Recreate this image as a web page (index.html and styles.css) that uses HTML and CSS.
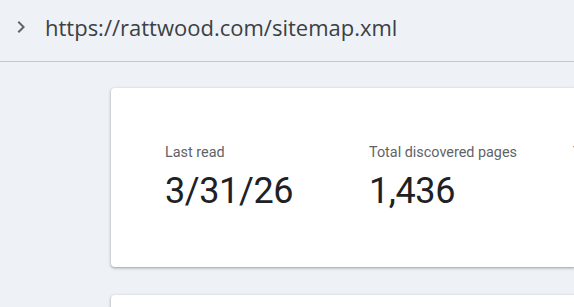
FILE: index.html
```html
<!DOCTYPE html>
<html>
<head>
<meta charset="utf-8">
<link rel="stylesheet" href="styles.css">
</head>
<body>
<header class="top">
  <svg class="chev" width="24" height="24" viewBox="0 0 24 24"><path d="M8.6 16.6 13.2 12 8.6 7.4 10 6l6 6-6 6z" fill="#5f6368"/></svg>
  <span class="url">https://rattwood.com/sitemap.xml</span>
</header>
<main class="content">
  <section class="card">
    <div class="stat">
      <div class="label">Last read</div>
      <div class="value">3/31/26</div>
    </div>
    <div class="stat">
      <div class="label">Total discovered pages</div>
      <div class="value">1,436</div>
    </div>
    <div class="stat">
      <div class="label">Total discovered videos</div>
      <div class="value">0</div>
    </div>
  </section>
  <section class="card second"></section>
</main>
</body>
</html>
```
FILE: styles.css
```css
html, body {
  margin: 0;
  padding: 0;
  background: #eef2f7;
  font-family: Roboto, "Liberation Sans", sans-serif;
  overflow: hidden;
}
.top {
  height: 62px;
  box-sizing: border-box;
  border-bottom: 1px solid #c4c7c5;
  display: flex;
  align-items: center;
  padding-left: 9px;
}
.chev {
  flex: none;
  margin-top: -7px;
}
.url {
  margin-left: 12px;
  margin-top: -8px;
  font-family: "Open Sans", Roboto, sans-serif;
  font-size: 22px;
  color: #3c4043;
}
.content {
  padding: 26px 0 0 111px;
  display: flex;
  flex-direction: column;
  gap: 28px;
}
.card {
  background: #fff;
  border-radius: 4px 0 0 4px;
  box-shadow: 0 1px 2px rgba(60,64,67,0.3), 0 1px 3px 1px rgba(60,64,67,0.15);
  height: 179px;
  box-sizing: border-box;
  padding: 55px 0 0 54px;
  display: flex;
  white-space: nowrap;
}
.second {
  height: 40px;
}
.stat {
  width: 204px;
  flex: none;
}
.label {
  font-size: 14.4px;
  color: #5f6368;
  line-height: 20px;
}
.value {
  font-size: 36px;
  letter-spacing: -0.4px;
  color: #202124;
  line-height: 44px;
  margin-top: 6px;
}
```
